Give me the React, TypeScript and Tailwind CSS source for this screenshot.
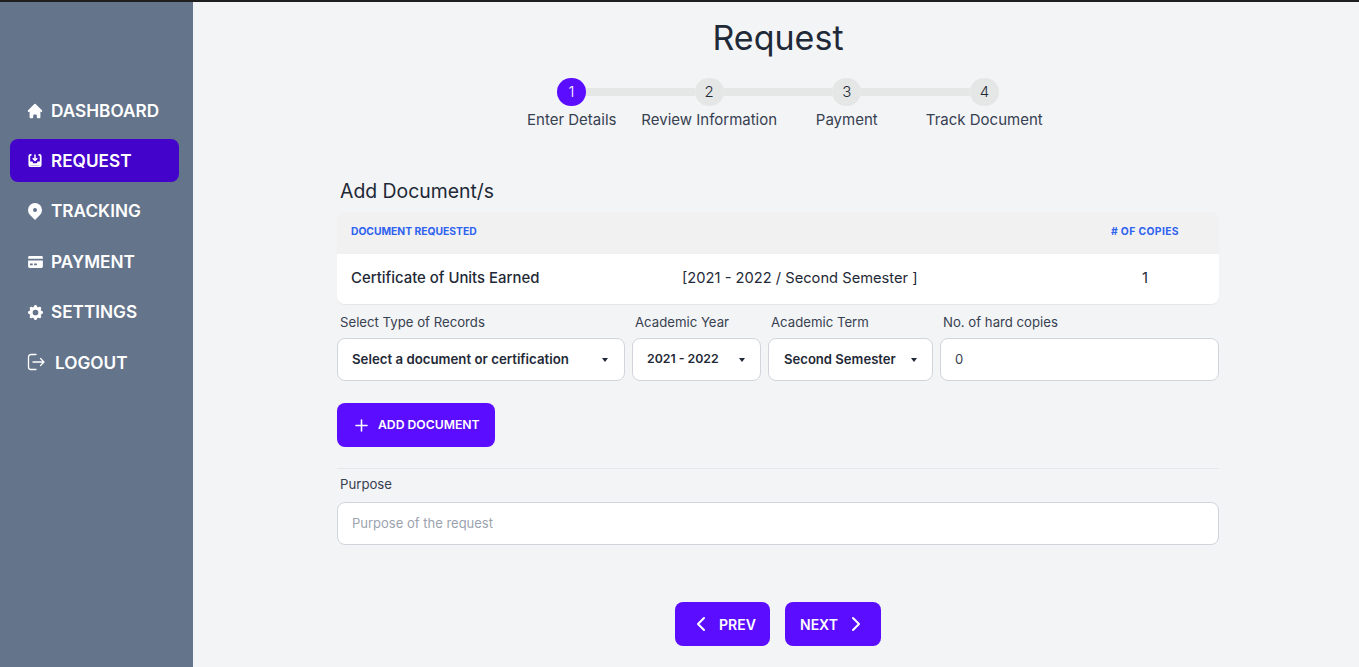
import { HiHome, HiLocationMarker, HiCog } from "react-icons/hi";
import { Plus, ChevronLeft, ChevronRight } from "lucide-react";
import type { ReactNode } from "react";

const InboxIcon = () => (
  <svg viewBox="0 0 16 16" className="w-[14px] h-[15px] shrink-0" fill="none">
    <path d="M4 1.500H2.600A1.600 1.600 0 0 0 1.500 3v9.500A2 2 0 0 0 3.500 14.500h9a2 2 0 0 0 2-2V3a1.600 1.600 0 0 0-1.100-1.500H12" stroke="white" strokeWidth="2" />
    <path d="M2 9h3l1 2h4l1-2h3v4H2z" fill="white" />
    <path d="M8 1v6.500M5.400 5.400 8 8l2.600-2.600" stroke="white" strokeWidth="1.700" />
  </svg>
);

const CardIcon = () => (
  <svg viewBox="0 0 16 13" className="w-[15px] h-[12px] shrink-0">
    <path d="M1.500 0h13A1.500 1.500 0 0 1 16 1.500V3H0V1.500A1.500 1.500 0 0 1 1.500 0z" fill="white" />
    <path fillRule="evenodd" d="M0 5h16v6.500a1.500 1.500 0 0 1-1.500 1.500h-13A1.500 1.500 0 0 1 0 11.500zM2 8v2h3V8zm4.500 0v2h3V8z" fill="white" />
  </svg>
);

const LogoutIcon = () => (
  <svg viewBox="0 0 18 18" className="w-[18px] h-[18px] shrink-0 ml-[1px]" fill="none" stroke="white" strokeWidth="1.300" strokeLinecap="round" strokeLinejoin="round">
    <path d="M9 1.500H4a2.500 2.500 0 0 0-2.500 2.500v10A2.500 2.500 0 0 0 4 16.500h5" />
    <path d="M6 9h11M13.500 5.500 17 9l-3.500 3.500" />
  </svg>
);

function NavItem({ icon, label, active, gap = "gap-[8px]" }: { icon: ReactNode; label: string; active?: boolean; gap?: string }) {
  return (
    <div className={`h-[43px] rounded-lg flex items-center pl-[17px] ${gap} ${active ? "bg-[#4403cb]" : ""}`}>
      <span className="w-[16px] flex justify-center items-center text-white shrink-0 [&>svg]:shrink-0">{icon}</span>
      <span className="text-[17.200px] font-semibold text-white">{label}</span>
    </div>
  );
}

function Field({ label, width, children }: { label: string; width: string; children: ReactNode }) {
  return (
    <div className={`flex flex-col ${width}`}>
      <div className="h-[34px] pl-[3px] pt-[8px] text-[13.200px] leading-[20px] text-[#374151]">{label}</div>
      {children}
    </div>
  );
}

function Select({ value, pad, size }: { value: string; pad: string; size: string }) {
  return (
    <div className={`h-[43px] bg-white border border-[#d1d5db] rounded-lg flex items-center justify-between ${pad}`}>
      <span className={`${size} font-semibold text-[#1f2937]`}>{value}</span>
      <span className="w-0 h-0 border-l-[3.500px] border-r-[3.500px] border-t-[4px] border-l-transparent border-r-transparent border-t-[#1f2937]" />
    </div>
  );
}

const steps = ["Enter Details", "Review Information", "Payment", "Track Document"];

export default function App() {
  return (
    <div className="h-[667px] flex flex-col bg-[#f3f4f6] overflow-hidden text-[#1f2937]" style={{ fontFamily: "Inter, 'Noto Sans', sans-serif" }}>
      <div className="h-[2px] bg-[#1f1f1f] shrink-0" />
      <div className="flex flex-1 min-h-0">
        <aside className="w-[193px] shrink-0 bg-[#64748b] pl-[10px] pr-[14px] pt-[87px] flex flex-col gap-[7.400px]">
          <NavItem icon={<HiHome size={18} />} label="DASHBOARD" />
          <NavItem active icon={<InboxIcon />} label="REQUEST" />
          <NavItem icon={<HiLocationMarker size={20} />} label="TRACKING" />
          <NavItem icon={<CardIcon />} label="PAYMENT" />
          <NavItem icon={<HiCog size={19} />} label="SETTINGS" />
          <NavItem gap="gap-[12px]" icon={<LogoutIcon />} label="LOGOUT" />
        </aside>
        <main className="flex-1 pl-[144px] pr-[140px] flex flex-col">
          <h1 className="text-center text-[34px] leading-[48px] mt-[12px] text-[#1f2937] font-normal">Request</h1>
          <div className="w-[550px] mx-auto mt-[16px]">
            <div className="flex items-center px-[54px]">
              {steps.map((_, i) => (
                <div key={i} className={`flex items-center ${i < 3 ? "flex-1" : ""}`}>
                  <div className={`w-[29px] h-[28px] rounded-full flex items-center justify-center text-[15px] font-light shrink-0 ${i === 0 ? "bg-[#5b0eff] text-white" : "bg-[#e5e7e6] text-[#1f2937]"}`}>{i + 1}</div>
                  {i < 3 && <div className="flex-1 h-[8px] bg-[#e5e7e6]" />}
                </div>
              ))}
            </div>
            <div className="grid grid-cols-4 mt-[3px]">
              {steps.map((s) => (
                <div key={s} className="text-center text-[15px] leading-[22px] text-[#374151] whitespace-nowrap">{s}</div>
              ))}
            </div>
          </div>
          <h2 className="text-[19.400px] leading-[28px] pl-[3px] mt-[46px] text-[#1f2937] font-normal">Add Document/s</h2>
          <div className="mt-[7px] rounded-lg shadow-[0_1px_1px_rgba(0,0,0,0.06)] overflow-hidden">
            <div className="h-[42px] bg-[#f1f1f2] flex items-center pl-[14px] pr-[40px] pb-[3px] justify-between text-[10.300px] font-bold text-[#2f62ee]">
              <span>DOCUMENT REQUESTED</span>
              <span className="tracking-[0.400px]"># OF COPIES</span>
            </div>
            <div className="h-[50px] bg-white flex items-center pl-[14px] pb-[2px] text-[14.700px] text-[#1f2937]">
              <span className="w-[331px] font-medium text-[14.900px]">Certificate of Units Earned</span>
              <span className="w-[438px]">[2021 - 2022 / Second Semester ]</span>
              <span className="w-[50px] text-center">1</span>
            </div>
          </div>
          <div className="flex gap-[7px]">
            <Field label="Select Type of Records" width="w-[288px]"><Select size="text-[13.250px]" value="Select a document or certification" pad="pl-[14px] pr-[16px]" /></Field>
            <Field label="Academic Year" width="w-[129px]"><Select size="text-[12.300px]" value="2021 - 2022" pad="pl-[14px] pr-[15px]" /></Field>
            <Field label="Academic Term" width="w-[165px]"><Select size="text-[13.100px]" value="Second Semester" pad="pl-[15px] pr-[15px]" /></Field>
            <Field label="No. of hard copies" width="w-[279px]">
              <div className="h-[43px] bg-white border border-[#d1d5db] rounded-lg flex items-center pl-[14px] text-[13px] text-[#374151]">0</div>
            </Field>
          </div>
          <div className="mt-[22px] self-start w-[158px] h-[44px] rounded-lg bg-[#5b0eff] text-white flex items-center pl-[15px] gap-[7px]">
            <Plus size={19} />
            <span className="text-[12.200px] font-semibold">ADD DOCUMENT</span>
          </div>
          <div className="mt-[21px] border-t border-[#e5e7eb]" />
          <div className="pl-[3px] mt-[5px] text-[13.200px] leading-[20px] text-[#374151]">Purpose</div>
          <div className="mt-[8px] h-[43px] bg-white border border-[#d1d5db] rounded-lg flex items-center pl-[14px] text-[13px] text-[#9ca3af]">Purpose of the request</div>
          <div className="mt-[57px] flex justify-center gap-[15px]">
            <div className="w-[95px] h-[44px] rounded-lg bg-[#5b0eff] text-white flex items-center pl-[14px] gap-[6px]">
              <ChevronLeft size={24} strokeWidth={2} />
              <span className="text-[14px] font-semibold">PREV</span>
            </div>
            <div className="w-[96px] h-[44px] rounded-lg bg-[#5b0eff] text-white flex items-center pl-[15px] gap-[6px]">
              <span className="text-[14px] font-semibold">NEXT</span>
              <ChevronRight size={24} strokeWidth={2} />
            </div>
          </div>
        </main>
      </div>
    </div>
  );
}
